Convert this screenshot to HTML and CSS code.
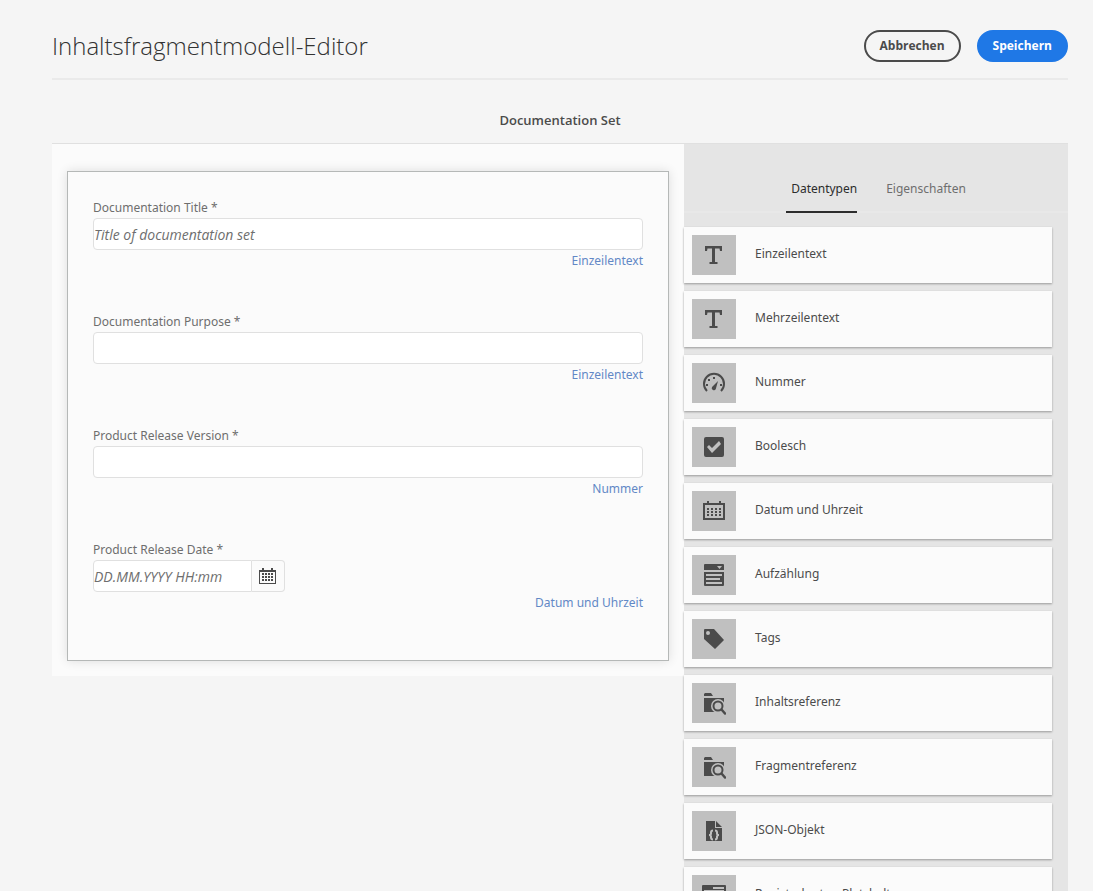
FILE: index.html
```html
<!DOCTYPE html>
<html lang="de">
<head>
<meta charset="utf-8">
<title>Inhaltsfragmentmodell-Editor</title>
<link rel="stylesheet" href="styles.css">
</head>
<body>
<svg class="symbols" aria-hidden="true">
  <symbol id="text" viewBox="0 0 24 24"><path d="M3 3h17v5h-2l-.5-2.500H13V19h2.500v2h-8v-2H10V5.500H5.500L5 8H3z"/></symbol>
  <symbol id="gauge" viewBox="0 0 24 24"><path d="M5 20A10 10 0 1 1 19 20" fill="none" stroke="currentColor" stroke-width="2"/><path d="M16 10l-2.200 8a2 2 0 0 1-3.800-2z"/><path d="M4 13h2v2H4zM6 8h2v2H6zM11 6h2v2h-2zM18 13h2v2h-2z"/></symbol>
  <symbol id="check" viewBox="0 0 24 24"><path fill-rule="evenodd" d="M4 2h16a2 2 0 0 1 2 2v16a2 2 0 0 1-2 2H4a2 2 0 0 1-2-2V4a2 2 0 0 1 2-2zM5 12l5 6 9-9-2-3-7 7-3-3z"/></symbol>
  <symbol id="calendar" viewBox="0 0 24 24"><path fill-rule="evenodd" d="M1 4h4V2h2v2h10V2h2v2h4v17H1zM3 6v13h18V6z"/><path d="M5 9h2v2H5zm4 0h2v2H9zm4 0h2v2h-2zm4 0h2v2h-2zM5 12h2v2H5zm4 0h2v2H9zm4 0h2v2h-2zm4 0h2v2h-2zM5 15h2v2H5zm4 0h2v2H9zm4 0h2v2h-2zm4 0h2v2h-2z"/></symbol>
  <symbol id="datepicker" viewBox="1 0 17 16"><path fill-rule="evenodd" d="M1 2h3V0h2v2h7V0h2v2h3v14H1zM2 4v11h15V4z"/><path d="M4 5h2v2H4zm3 0h2v2H7zm3 0h2v2h-2zm3 0h2v2h-2zM4 8h2v2H4zm3 0h2v2H7zm3 0h2v2h-2zm3 0h2v2h-2zM4 11h2v2H4zm3 0h2v2H7zm3 0h2v2h-2zm3 0h2v2h-2z"/></symbol>
  <symbol id="list" viewBox="0 0 24 24"><path fill-rule="evenodd" d="M3 1h18a1 1 0 0 1 1 1v5H2V2a1 1 0 0 1 1-1zM15 3l2.500 3L20 3zM2 9h20v13a1 1 0 0 1-1 1H3a1 1 0 0 1-1-1zM4 11v2h16v-2zM4 15v2h14v-2zM4 19v2h16v-2z"/></symbol>
  <symbol id="tag" viewBox="0 0 24 24"><path fill-rule="evenodd" d="M3 2h9l10 11-9 9L2 12V3a1 1 0 0 1 1-1zM6 4a2 2 0 1 0 0 4a2 2 0 1 0 0-4z"/></symbol>
  <symbol id="search" viewBox="0 0 24 24"><path d="M2 3l1-1h6l2 3H2zM2 7h20v14H2z"/><circle class="halo" cx="16" cy="15" r="7"/><path class="halo" d="M17 21h6v-6h-6z"/><circle cx="16" cy="15" r="4.500" fill="none" stroke="currentColor" stroke-width="2"/><path d="M19.500 18.500l3.500 4" fill="none" stroke="currentColor" stroke-width="2.500" stroke-linecap="round"/></symbol>
  <symbol id="json" viewBox="0 0 24 24"><path d="M4 2h9v7h7v13H4zM14 2l6 6h-6z"/><path class="brace" d="M11 11.500q-2 0-2 2v1q0 1.500-2 1.500 2 0 2 1.500v1q0 2 2 2M13 11.500q2 0 2 2v1q0 1.500 2 1.500-2 0-2 1.500v1q0 2-2 2"/></symbol>
  <symbol id="tabs" viewBox="0 0 24 24"><path fill-rule="evenodd" d="M1 2h22a1 1 0 0 1 1 1v18H0V3a1 1 0 0 1 1-1zM11 4v2h11V4zM2 7v12h20V7z"/></symbol>
</svg>

<header class="page-header">
  <h1 class="page-title">Inhaltsfragmentmodell-Editor</h1>
  <div class="actions">
    <button class="button" type="button">Abbrechen</button>
    <button class="button button-primary" type="button">Speichern</button>
  </div>
</header>

<main class="editor">
  <h2 class="model-name">Documentation Set</h2>
  <div class="columns">
    <section class="canvas">
      <form class="model">
        <div class="field">
          <label class="field-label" for="title">Documentation Title *</label>
          <input class="field-input" id="title" type="text" placeholder="Title of documentation set">
          <p class="field-type">Einzeilentext</p>
        </div>
        <div class="field">
          <label class="field-label" for="purpose">Documentation Purpose *</label>
          <input class="field-input" id="purpose" type="text">
          <p class="field-type">Einzeilentext</p>
        </div>
        <div class="field">
          <label class="field-label" for="version">Product Release Version *</label>
          <input class="field-input" id="version" type="text">
          <p class="field-type">Nummer</p>
        </div>
        <div class="field">
          <label class="field-label" for="date">Product Release Date *</label>
          <div class="date-group">
            <input class="field-input date-input" id="date" type="text" placeholder="DD.MM.YYYY HH:mm">
            <button class="date-button" type="button" aria-label="Kalender"><svg class="date-icon"><use href="#datepicker"/></svg></button>
          </div>
          <p class="field-type">Datum und Uhrzeit</p>
        </div>
      </form>
    </section>
    <aside class="side">
      <div class="tabs" role="tablist">
        <button class="tab tab-active" type="button" role="tab" aria-selected="true">Datentypen</button>
        <button class="tab" type="button" role="tab" aria-selected="false">Eigenschaften</button>
      </div>
      <ul class="types">
        <li class="type"><span class="tile"><svg class="icon"><use href="#text"/></svg></span><span class="type-name">Einzeilentext</span></li>
        <li class="type"><span class="tile"><svg class="icon"><use href="#text"/></svg></span><span class="type-name">Mehrzeilentext</span></li>
        <li class="type"><span class="tile"><svg class="icon"><use href="#gauge"/></svg></span><span class="type-name">Nummer</span></li>
        <li class="type"><span class="tile"><svg class="icon"><use href="#check"/></svg></span><span class="type-name">Boolesch</span></li>
        <li class="type"><span class="tile"><svg class="icon"><use href="#calendar"/></svg></span><span class="type-name">Datum und Uhrzeit</span></li>
        <li class="type"><span class="tile"><svg class="icon"><use href="#list"/></svg></span><span class="type-name">Aufzählung</span></li>
        <li class="type"><span class="tile"><svg class="icon"><use href="#tag"/></svg></span><span class="type-name">Tags</span></li>
        <li class="type"><span class="tile"><svg class="icon"><use href="#search"/></svg></span><span class="type-name">Inhaltsreferenz</span></li>
        <li class="type"><span class="tile"><svg class="icon"><use href="#search"/></svg></span><span class="type-name">Fragmentreferenz</span></li>
        <li class="type"><span class="tile"><svg class="icon"><use href="#json"/></svg></span><span class="type-name">JSON-Objekt</span></li>
        <li class="type"><span class="tile"><svg class="icon"><use href="#tabs"/></svg></span><span class="type-name">Registerkarten-Platzhalter</span></li>
      </ul>
    </aside>
  </div>
</main>
</body>
</html>
```

FILE: styles.css
```css
* {
  box-sizing: border-box;
}

body {
  display: flex;
  flex-direction: column;
  height: 100vh;
  margin: 0;
  padding: 0 25px 0 52px;
  overflow: hidden;
  background: #f5f5f5;
  color: #4b4b4b;
  font: 12px/20px "Noto Sans", sans-serif;
}

button,
input {
  font: inherit;
}

.symbols {
  position: absolute;
  width: 0;
  height: 0;
}

.page-header {
  display: flex;
  flex: none;
  justify-content: space-between;
  align-items: center;
  padding: 28px 0 14px;
  border-bottom: 2px solid #eaeaea;
}

.page-title {
  margin: 0;
  color: #323232;
  font-family: "Open Sans", sans-serif;
  font-size: 24px;
  font-weight: 300;
  line-height: 36px;
}

.actions {
  display: flex;
  gap: 16px;
}

.button {
  height: 32px;
  padding: 0 14px;
  border: 2px solid #4b4b4b;
  border-radius: 16px;
  background: transparent;
  color: #4b4b4b;
  font-family: "Open Sans", sans-serif;
  font-weight: 700;
  line-height: 26px;
}

.button-primary {
  border-color: #1f78e6;
  background: #1f78e6;
  color: #fff;
}

.editor {
  flex: none;
}

.model-name {
  margin: 0;
  padding: 30px 0 13px;
  border-bottom: 1px solid #e0e0e0;
  font-family: "Open Sans", sans-serif;
  font-size: 13px;
  font-weight: 600;
  line-height: 20px;
  text-align: center;
}

.columns {
  display: grid;
  grid-template-columns: minmax(0, 1fr) 384px;
  align-items: start;
}

.canvas {
  padding: 27px 15px 15px;
  background: #fbfbfb;
}

.model {
  display: flex;
  flex-direction: column;
  gap: 41px;
  padding: 26px 25px 47px;
  border: 1px solid #b5b8b7;
  box-shadow: 0 0 10px rgba(0, 0, 0, 0.12);
}

.field {
  display: flex;
  flex-direction: column;
  color: #6e6e6e;
}

.field-input {
  width: 100%;
  height: 32px;
  padding: 0;
  border: 1px solid #e0e0e0;
  border-radius: 4px;
  background: #fff;
  color: #4b4b4b;
  font-family: "Open Sans", sans-serif;
  font-size: 14px;
}

.field-input::placeholder {
  color: #6e6e6e;
  font-style: italic;
  opacity: 1;
}

.field-type {
  margin: 0;
  padding-top: 1px;
  color: #6288c6;
  text-align: right;
}

.date-group {
  display: flex;
  width: 192px;
}

.date-input {
  flex: 1;
  min-width: 0;
  border-radius: 4px 0 0 4px;
}

.date-button {
  display: grid;
  place-items: center;
  width: 33px;
  height: 32px;
  padding: 0 2px 0 0;
  border: 1px solid #e0e0e0;
  border-left: 0;
  border-radius: 0 4px 4px 0;
  background: #fbfbfb;
  color: #4b4b4b;
}

.date-icon {
  width: 17px;
  height: 16px;
  fill: currentColor;
}

.side {
  background: #e5e5e5;
}

.tabs {
  display: flex;
  justify-content: center;
  gap: 24px;
  padding-top: 27px;
  border-bottom: 2px solid #e8e8e8;
}

.tab {
  margin-bottom: -2px;
  padding: 8px 0 12px 5px;
  border: 0;
  border-bottom: 2px solid transparent;
  background: none;
  color: #6e6e6e;
}

.tab-active {
  border-bottom-color: #2c2c2c;
  color: #2c2c2c;
}

.types {
  display: flex;
  flex-direction: column;
  gap: 8px;
  margin: 0;
  padding: 14px 16px 16px 0;
  list-style: none;
}

.type {
  display: flex;
  align-items: center;
  gap: 19px;
  padding: 8px;
  background: #fbfbfb;
  box-shadow: 0 1px 2px #999;
}

.tile {
  display: grid;
  place-items: center;
  width: 44px;
  height: 40px;
  background: #c0c0c0;
  color: #4b4b4b;
}

.icon {
  width: 24px;
  height: 24px;
  fill: currentColor;
}

.halo {
  fill: #c0c0c0;
}

.brace {
  fill: none;
  stroke: #c0c0c0;
  stroke-width: 2;
}

.type-name {
  padding-bottom: 2px;
}
```
